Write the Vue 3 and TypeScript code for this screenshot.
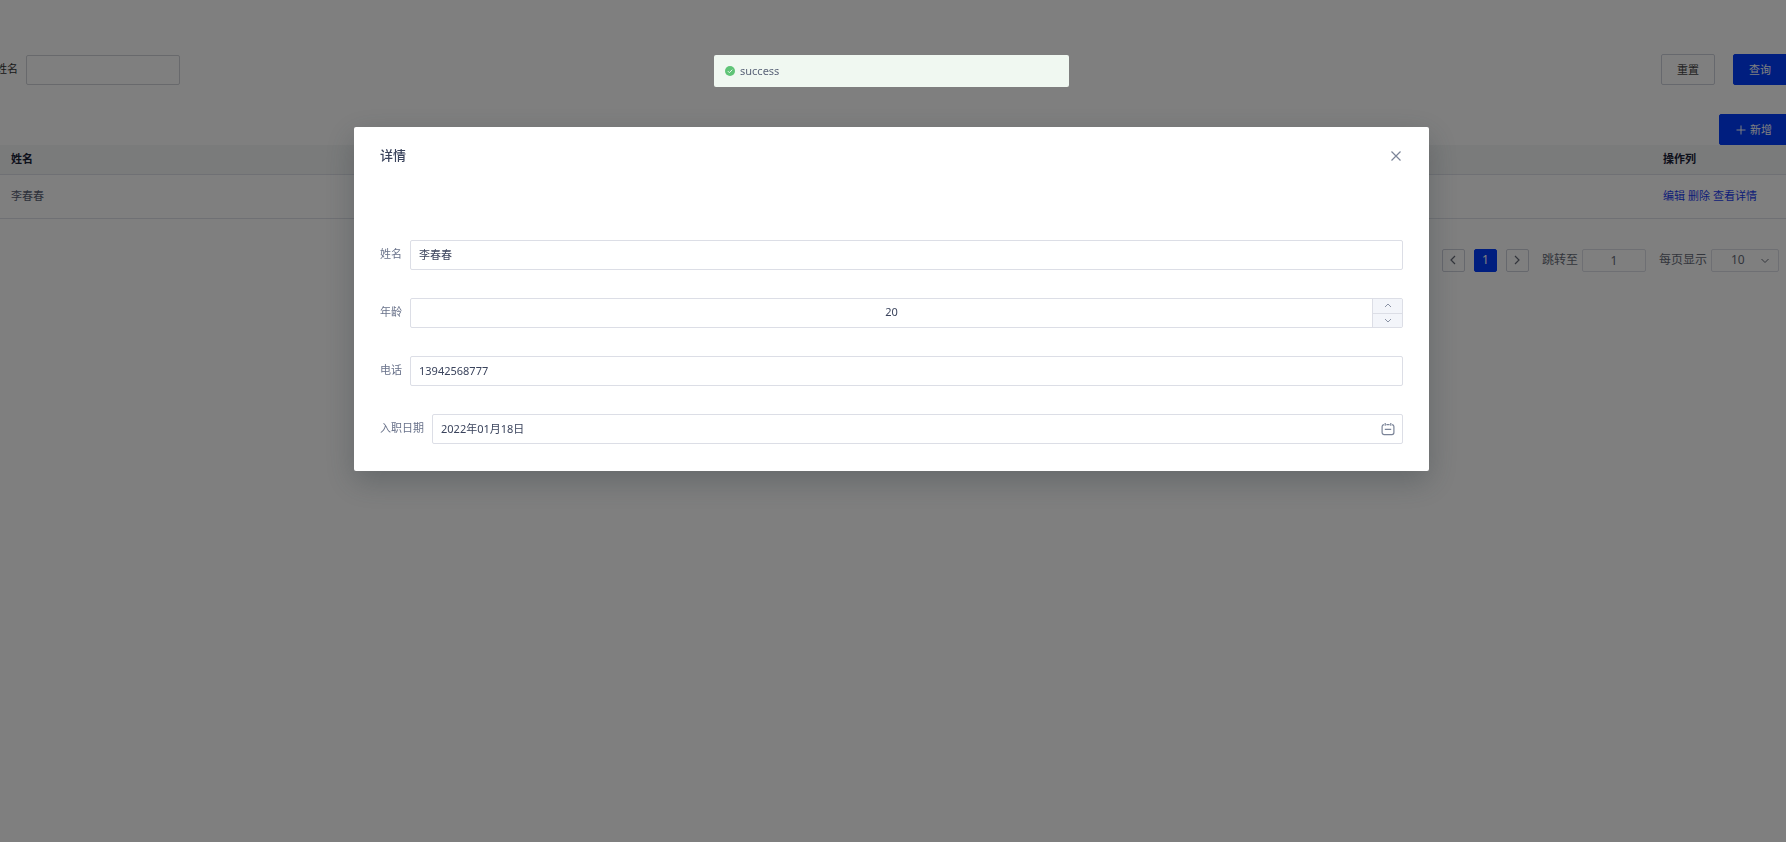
<script setup lang="ts">
import { ref } from 'vue'

interface Employee {
  id: number
  name: string
}

const keyword = ref('')
const rows = ref<Employee[]>([{ id: 1, name: '李春春' }])
const actions: string[] = ['编辑', '删除', '查看详情']
const jumpTo = ref('1')
const pageSize = ref('10')
const name = ref('李春春')
const age = ref('20')
const phone = ref('13942568777')
const entryDate = ref('2022年01月18日')
const toast = ref('success')

function step(delta: number): void {
  age.value = String(Number(age.value) + delta)
}
</script>

<template>
  <main class="page">
    <form class="toolbar" @submit.prevent>
      <label class="toolbar-label" for="keyword">姓名</label>
      <input id="keyword" v-model="keyword" class="field search" type="text" />
      <div class="toolbar-buttons">
        <button class="btn plain" type="button">重置</button>
        <button class="btn primary" type="submit">查询</button>
      </div>
    </form>

    <div class="create">
      <button class="btn primary with-icon" type="button">
        <svg width="10" height="10" viewBox="0 0 10 10" fill="none" stroke="currentColor">
          <path d="M5 0.5v9M0.5 5h9" />
        </svg>
        新增
      </button>
    </div>

    <table class="table">
      <thead>
        <tr>
          <th>姓名</th>
          <th class="ops">操作列</th>
        </tr>
      </thead>
      <tbody>
        <tr v-for="row in rows" :key="row.id">
          <td>{{ row.name }}</td>
          <td class="ops">
            <div class="links">
              <a v-for="action in actions" :key="action" href="#">{{ action }}</a>
            </div>
          </td>
        </tr>
      </tbody>
    </table>

    <nav class="pager">
      <button class="page-btn" type="button" aria-label="上一页">
        <svg width="10" height="10" viewBox="0 0 10 10" fill="none" stroke="currentColor" stroke-width="1.2">
          <path d="M7 1L3 5l4 4" />
        </svg>
      </button>
      <button class="page-btn current" type="button">1</button>
      <button class="page-btn" type="button" aria-label="下一页">
        <svg width="10" height="10" viewBox="0 0 10 10" fill="none" stroke="currentColor" stroke-width="1.2">
          <path d="M3 1l4 4-4 4" />
        </svg>
      </button>
      <div class="pager-group">
        <label for="jump">跳转至</label>
        <input id="jump" v-model="jumpTo" class="field jump" type="text" />
      </div>
      <div class="pager-group">
        <label for="size">每页显示</label>
        <div class="select-wrap">
          <select id="size" v-model="pageSize" class="field size">
            <option>10</option>
            <option>20</option>
            <option>50</option>
          </select>
          <svg class="caret" width="8" height="6" viewBox="0 0 8 6" fill="none" stroke="currentColor">
            <path d="M0.5 1L4 4.5 7.5 1" />
          </svg>
        </div>
      </div>
    </nav>
  </main>

  <div class="mask">
    <section class="dialog" role="dialog" aria-labelledby="dialog-title">
      <header class="dialog-head">
        <h2 id="dialog-title">详情</h2>
        <button class="close" type="button" aria-label="关闭">
          <svg width="10" height="10" viewBox="0 0 10 10" fill="none" stroke="currentColor" stroke-width="1.2">
            <path d="M0.5 0.5l9 9M9.5 0.5l-9 9" />
          </svg>
        </button>
      </header>
      <form class="form" @submit.prevent>
        <div class="row">
          <label for="name">姓名</label>
          <input id="name" v-model="name" class="field grow" type="text" />
        </div>
        <div class="row">
          <label for="age">年龄</label>
          <div class="number">
            <input id="age" v-model="age" class="number-input" type="text" />
            <div class="steps">
              <button type="button" aria-label="增加" @click="step(1)">
                <svg width="8" height="5" viewBox="0 0 8 5" fill="none" stroke="currentColor">
                  <path d="M1 4l3-3 3 3" />
                </svg>
              </button>
              <button type="button" aria-label="减少" @click="step(-1)">
                <svg width="8" height="5" viewBox="0 0 8 5" fill="none" stroke="currentColor">
                  <path d="M1 1l3 3 3-3" />
                </svg>
              </button>
            </div>
          </div>
        </div>
        <div class="row">
          <label for="phone">电话</label>
          <input id="phone" v-model="phone" class="field grow" type="text" />
        </div>
        <div class="row">
          <label for="date">入职日期</label>
          <div class="date">
            <input id="date" v-model="entryDate" class="field grow" type="text" />
            <svg class="calendar" width="14" height="14" viewBox="0 0 14 14" fill="none" stroke="currentColor" stroke-width="1.2">
              <path d="M3 2.6A2 2 0 0 0 1.1 4.6v6a2 2 0 0 0 2 2h7.8a2 2 0 0 0 2-2v-6a2 2 0 0 0-1.9-2M5.4 2.6h3.2M4.2 1v2.8M9.8 1v2.8M3.8 7.4h6.4" />
            </svg>
          </div>
        </div>
      </form>
    </section>
  </div>

  <div class="toast" role="status">
    <svg width="10" height="10" viewBox="0 0 10 10">
      <circle cx="5" cy="5" r="5" fill="#5fc477" />
      <path d="M2.8 5.1l1.6 1.6 2.9-3" fill="none" stroke="#e8f7eb" />
    </svg>
    <span>{{ toast }}</span>
  </div>
</template>

<style>
body {
  margin: 0;
  overflow: hidden;
  background: #fff;
}
</style>

<style scoped>
.page,
.mask,
.toast {
  font-family: 'Noto Sans', 'Noto Sans CJK SC', sans-serif;
  font-size: 11px;
  line-height: 16px;
  color: #3a435c;
}

*,
*::before {
  box-sizing: border-box;
}

button,
input,
select {
  font: inherit;
  color: inherit;
  margin: 0;
  outline: none;
}

.page {
  padding-top: 54px;
  overflow: hidden;
}

.toolbar {
  display: flex;
  align-items: center;
  margin: 0 -3px 0 -4px;
  height: 31px;
}

.toolbar-label {
  color: #333;
  margin-right: 8px;
  padding-bottom: 2px;
}

.field {
  height: 30px;
  padding: 0 8px;
  border: 1px solid #dcdee6;
  border-radius: 2px;
  background: transparent;
}

.search {
  width: 154px;
  border-color: #d0d2d8;
}

.toolbar-buttons {
  display: flex;
  gap: 18px;
  margin-left: auto;
}

.btn {
  height: 31px;
  padding: 0 16px;
  border: 1px solid #003cff;
  border-radius: 2px;
}

.plain {
  border-color: #cdd0da;
  background: transparent;
  color: #444;
}

.plain,
.plain + .primary {
  padding: 0 15px;
}

.plain + .primary {
  padding-right: 17px;
}

.primary {
  background: #003cff;
  color: #fff;
}

.create {
  display: flex;
  justify-content: flex-end;
  margin: 29px -3px 0 0;
}

.with-icon {
  display: flex;
  align-items: center;
  gap: 4px;
}

.table {
  width: 100%;
  border-collapse: collapse;
  table-layout: fixed;
}

th,
td {
  padding: 0 11px;
  text-align: left;
  border-bottom: 1px solid #dfe1e8;
}

th {
  height: 29px;
  background: #f5f6f6;
  color: #1a2236;
  font-weight: 700;
}

td {
  height: 44px;
  color: #5a6275;
}

.ops {
  width: 134px;
}

.links {
  display: flex;
  gap: 3px;
}

.links a {
  color: #1c40f0;
  text-decoration: none;
}

.pager {
  display: flex;
  justify-content: flex-end;
  align-items: center;
  gap: 9px;
  margin-top: 30px;
  padding-right: 7px;
  font-size: 12px;
  color: #666b78;
}

.page-btn {
  display: flex;
  align-items: center;
  justify-content: center;
  width: 23px;
  height: 23px;
  padding: 0;
  border: 1px solid #cdd0da;
  border-radius: 2px;
  background: transparent;
}

.current {
  border-color: #003cff;
  background: #003cff;
  color: #fff;
}

.pager-group {
  display: flex;
  align-items: center;
  gap: 4px;
  margin-left: 4px;
}

.jump {
  width: 64px;
  height: 23px;
  text-align: center;
}

.select-wrap {
  position: relative;
}

.size {
  display: block;
  width: 68px;
  height: 23px;
  padding: 0 20px 0 19px;
  appearance: none;
}

.caret {
  position: absolute;
  top: 9px;
  right: 10px;
  pointer-events: none;
}

.mask {
  position: fixed;
  inset: 0;
  padding: 127px 357px 0 354px;
  background: rgba(0, 0, 0, 0.5);
}

.dialog {
  padding: 0 26px 27px;
  border-radius: 2px;
  background: #fff;
  box-shadow: 0 10px 30px rgba(38, 50, 56, 0.3);
}

.dialog-head {
  display: flex;
  align-items: center;
  justify-content: space-between;
  height: 57px;
  padding-right: 2px;
}

h2 {
  margin: 0;
  font-size: 13px;
  line-height: 19px;
  font-weight: 500;
}

.close {
  display: flex;
  padding: 0;
  border: 0;
  background: none;
  color: #7b8498;
}

.form {
  display: grid;
  gap: 28px;
  padding-top: 56px;
}

.row {
  display: flex;
  align-items: center;
  gap: 8px;
}

.row label {
  padding-bottom: 2px;
  color: #69728a;
}

.row .field {
  padding-bottom: 2px;
}

.grow {
  flex: 1;
  min-width: 0;
}

.number {
  display: flex;
  flex: 1;
  height: 30px;
  border: 1px solid #dcdee6;
  border-radius: 2px;
  overflow: hidden;
}

.number-input {
  flex: 1;
  min-width: 0;
  padding: 0 0 2px;
  border: 0;
  background: transparent;
  text-align: center;
}

.steps {
  display: flex;
  flex-direction: column;
  width: 30px;
  border-left: 1px solid #dcdee6;
}

.steps button {
  display: flex;
  flex: 1;
  align-items: center;
  justify-content: center;
  padding: 0;
  border: 0;
  background: #f3f5fa;
  color: #8b93a5;
}

.steps button + button {
  border-top: 1px solid #dcdee6;
}

.date {
  position: relative;
  display: flex;
  flex: 1;
}

.calendar {
  position: absolute;
  top: 8px;
  right: 8px;
  color: #7b8498;
  pointer-events: none;
}

.toast {
  position: fixed;
  top: 55px;
  left: 50%;
  display: flex;
  align-items: center;
  gap: 5px;
  width: 355px;
  height: 32px;
  margin-left: -179px;
  padding: 0 11px;
  border-radius: 2px;
  background: #f0f8f1;
  color: #5b6579;
}
</style>
